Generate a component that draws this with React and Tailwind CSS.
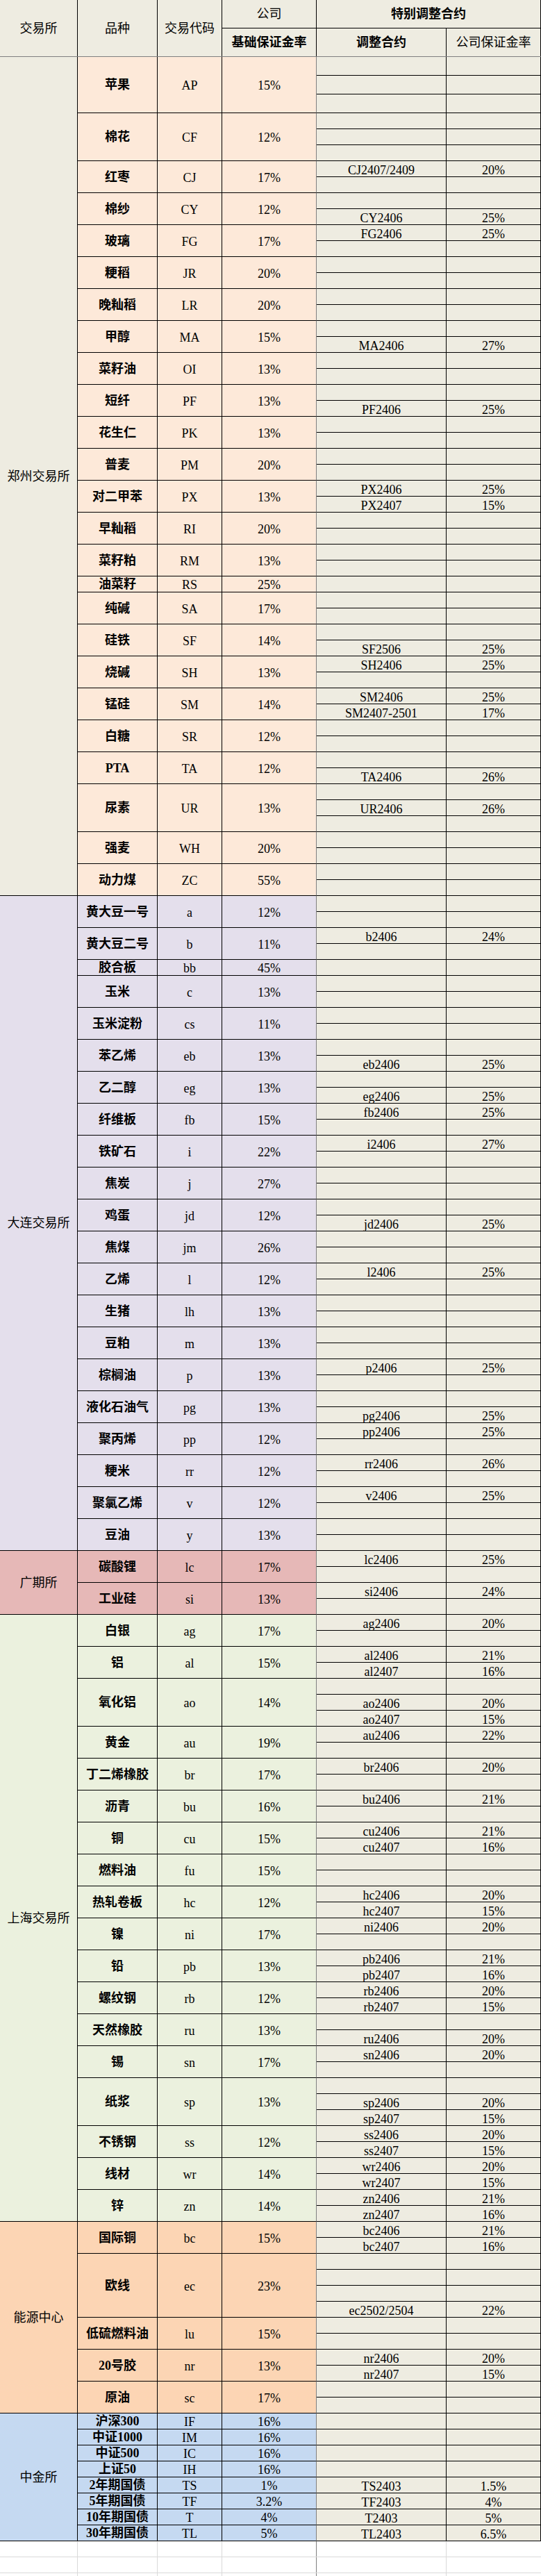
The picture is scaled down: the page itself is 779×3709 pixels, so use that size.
import React from 'react';

// [品种, 代码, 基础保证金率, 特别调整子行, 子行高度]
const groups = [
  {
    name: '郑州交易所',
    ex: 'bg-[#eeece1]',
    cell: 'bg-[#fde9d9]',
    items: [
      ['苹果', 'AP', '15%', [null, null, null], 27],
      ['棉花', 'CF', '12%', [null, null, null]],
      ['红枣', 'CJ', '17%', [['CJ2407/2409', '20%'], null]],
      ['棉纱', 'CY', '12%', [null, ['CY2406', '25%']]],
      ['玻璃', 'FG', '17%', [['FG2406', '25%'], null]],
      ['粳稻', 'JR', '20%', [null, null]],
      ['晚籼稻', 'LR', '20%', [null, null]],
      ['甲醇', 'MA', '15%', [null, ['MA2406', '27%']]],
      ['菜籽油', 'OI', '13%', [null, null]],
      ['短纤', 'PF', '13%', [null, ['PF2406', '25%']]],
      ['花生仁', 'PK', '13%', [null, null]],
      ['普麦', 'PM', '20%', [null, null]],
      ['对二甲苯', 'PX', '13%', [['PX2406', '25%'], ['PX2407', '15%']]],
      ['早籼稻', 'RI', '20%', [null, null]],
      ['菜籽粕', 'RM', '13%', [null, null]],
      ['油菜籽', 'RS', '25%', [null]],
      ['纯碱', 'SA', '17%', [null, null]],
      ['硅铁', 'SF', '14%', [null, ['SF2506', '25%']]],
      ['烧碱', 'SH', '13%', [['SH2406', '25%'], null]],
      ['锰硅', 'SM', '14%', [['SM2406', '25%'], ['SM2407-2501', '17%']]],
      ['白糖', 'SR', '12%', [null, null]],
      ['PTA', 'TA', '12%', [null, ['TA2406', '26%']]],
      ['尿素', 'UR', '13%', [null, ['UR2406', '26%'], null]],
      ['强麦', 'WH', '20%', [null, null]],
      ['动力煤', 'ZC', '55%', [null, null]],
    ],
  },
  {
    name: '大连交易所',
    ex: 'bg-[#e4dfec]',
    cell: 'bg-[#e4dfec]',
    items: [
      ['黄大豆一号', 'a', '12%', [null, null]],
      ['黄大豆二号', 'b', '11%', [['b2406', '24%'], null]],
      ['胶合板', 'bb', '45%', [null]],
      ['玉米', 'c', '13%', [null, null]],
      ['玉米淀粉', 'cs', '11%', [null, null]],
      ['苯乙烯', 'eb', '13%', [null, ['eb2406', '25%']]],
      ['乙二醇', 'eg', '13%', [null, ['eg2406', '25%']]],
      ['纤维板', 'fb', '15%', [['fb2406', '25%'], null]],
      ['铁矿石', 'i', '22%', [['i2406', '27%'], null]],
      ['焦炭', 'j', '27%', [null, null]],
      ['鸡蛋', 'jd', '12%', [null, ['jd2406', '25%']]],
      ['焦煤', 'jm', '26%', [null, null]],
      ['乙烯', 'l', '12%', [['l2406', '25%'], null]],
      ['生猪', 'lh', '13%', [null, null]],
      ['豆粕', 'm', '13%', [null, null]],
      ['棕榈油', 'p', '13%', [['p2406', '25%'], null]],
      ['液化石油气', 'pg', '13%', [null, ['pg2406', '25%']]],
      ['聚丙烯', 'pp', '12%', [['pp2406', '25%'], null]],
      ['粳米', 'rr', '12%', [['rr2406', '26%'], null]],
      ['聚氯乙烯', 'v', '12%', [['v2406', '25%'], null]],
      ['豆油', 'y', '13%', [null, null]],
    ],
  },
  {
    name: '广期所',
    ex: 'bg-[#e6b8b7]',
    cell: 'bg-[#e6b8b7]',
    items: [
      ['碳酸锂', 'lc', '17%', [['lc2406', '25%'], null]],
      ['工业硅', 'si', '13%', [['si2406', '24%'], null]],
    ],
  },
  {
    name: '上海交易所',
    ex: 'bg-[#ebf1de]',
    cell: 'bg-[#ebf1de]',
    items: [
      ['白银', 'ag', '17%', [['ag2406', '20%'], null]],
      ['铝', 'al', '15%', [['al2406', '21%'], ['al2407', '16%']]],
      ['氧化铝', 'ao', '14%', [null, ['ao2406', '20%'], ['ao2407', '15%']]],
      ['黄金', 'au', '19%', [['au2406', '22%'], null]],
      ['丁二烯橡胶', 'br', '17%', [['br2406', '20%'], null]],
      ['沥青', 'bu', '16%', [['bu2406', '21%'], null]],
      ['铜', 'cu', '15%', [['cu2406', '21%'], ['cu2407', '16%']]],
      ['燃料油', 'fu', '15%', [null, null]],
      ['热轧卷板', 'hc', '12%', [['hc2406', '20%'], ['hc2407', '15%']]],
      ['镍', 'ni', '17%', [['ni2406', '20%'], null]],
      ['铅', 'pb', '13%', [['pb2406', '21%'], ['pb2407', '16%']]],
      ['螺纹钢', 'rb', '12%', [['rb2406', '20%'], ['rb2407', '15%']]],
      ['天然橡胶', 'ru', '13%', [null, ['ru2406', '20%']]],
      ['锡', 'sn', '17%', [['sn2406', '20%'], null]],
      ['纸浆', 'sp', '13%', [null, ['sp2406', '20%'], ['sp2407', '15%']]],
      ['不锈钢', 'ss', '12%', [['ss2406', '20%'], ['ss2407', '15%']]],
      ['线材', 'wr', '14%', [['wr2406', '20%'], ['wr2407', '15%']]],
      ['锌', 'zn', '14%', [['zn2406', '21%'], ['zn2407', '16%']]],
    ],
  },
  {
    name: '能源中心',
    ex: 'bg-[#fcd5b4]',
    cell: 'bg-[#fcd5b4]',
    items: [
      ['国际铜', 'bc', '15%', [['bc2406', '21%'], ['bc2407', '16%']]],
      ['欧线', 'ec', '23%', [null, null, null, ['ec2502/2504', '22%']]],
      ['低硫燃料油', 'lu', '15%', [null, null]],
      ['20号胶', 'nr', '13%', [['nr2406', '20%'], ['nr2407', '15%']]],
      ['原油', 'sc', '17%', [null, null]],
    ],
  },
  {
    name: '中金所',
    ex: 'bg-[#c5d9f1]',
    cell: 'bg-[#c5d9f1]',
    items: [
      ['沪深300', 'IF', '16%', [null]],
      ['中证1000', 'IM', '16%', [null]],
      ['中证500', 'IC', '16%', [null]],
      ['上证50', 'IH', '16%', [null]],
      ['2年期国债', 'TS', '1%', [['TS2403', '1.5%']]],
      ['5年期国债', 'TF', '3.2%', [['TF2403', '4%']]],
      ['10年期国债', 'T', '4%', [['T2403', '5%']]],
      ['30年期国债', 'TL', '5%', [['TL2403', '6.5%']]],
    ],
  },
];

function Header() {
  return (
    <div className="flex h-[82px] border-b border-[#7f7f7f] bg-[#eeece1]">
      <div className="flex w-[112px] items-center justify-center border-r border-black">交易所</div>
      <div className="flex w-[115px] items-center justify-center border-r border-black">品种</div>
      <div className="flex w-[93px] items-center justify-center border-r border-black">交易代码</div>
      <div className="flex w-[136px] flex-col border-r border-black">
        <div className="flex h-[41px] items-center justify-center border-b border-black">公司</div>
        <div className="flex flex-1 items-center justify-center font-semibold">基础保证金率</div>
      </div>
      <div className="flex w-[323px] flex-col">
        <div className="flex h-[41px] items-center justify-center border-r border-b border-black font-semibold">
          特别调整合约
        </div>
        <div className="flex flex-1">
          <div className="flex w-[187px] items-center justify-center border-r border-black font-semibold">调整合约</div>
          <div className="flex w-[136px] items-center justify-center border-r border-black">公司保证金率</div>
        </div>
      </div>
    </div>
  );
}

function Variety({ item, bg }) {
  const [name, code, rate, subs, h] = item;
  return (
    <div className="flex">
      <div className={`flex w-[115px] items-center justify-center border-r border-b border-black font-semibold ${bg}`}>
        {name}
      </div>
      <div className={`flex w-[93px] items-center justify-center border-r border-b border-black pt-[2px] ${bg}`}>
        {code}
      </div>
      <div className={`flex w-[136px] items-center justify-center border-r border-b border-r-[#808080] border-b-black pt-[2px] ${bg}`}>
        {rate}
      </div>
      <div className="flex w-[323px] flex-col bg-[#eeece1]">
        {subs.map((s, i) => (
          <div key={i} className={`flex border-b border-black ${h === 27 ? 'h-[27px]' : 'h-[23px]'}`}>
            <div className="flex w-[187px] items-center justify-center border-r border-black pt-[3px]">{s ? s[0] : ''}</div>
            <div className="flex w-[136px] items-center justify-center border-r border-black pt-[3px]">{s ? s[1] : ''}</div>
          </div>
        ))}
      </div>
    </div>
  );
}

function Group({ g }) {
  return (
    <div className="flex">
      <div className={`flex w-[112px] shrink-0 items-center justify-center border-r border-b border-black ${g.ex}`}>
        {g.name}
      </div>
      <div className="flex flex-col">
        {g.items.map((it) => (
          <Variety key={it[1]} item={it} bg={g.cell} />
        ))}
      </div>
    </div>
  );
}

function EmptyRow({ last }) {
  return (
    <div className={`flex bg-white ${last ? 'h-[4px]' : 'h-[23px] border-b border-[#d9d9d9]'}`}>
      <div className="w-[112px] border-r border-[#d9d9d9]" />
      <div className="w-[115px] border-r border-[#d9d9d9]" />
      <div className="w-[93px] border-r border-[#d9d9d9]" />
      <div className="w-[136px] border-r border-[#808080]" />
      <div className="w-[187px] border-r border-[#d9d9d9]" />
      <div className="w-[136px]" />
    </div>
  );
}

export default function App() {
  return (
    <div className="w-[779px] bg-white font-['Liberation_Serif','Noto_Sans_CJK_SC',serif] text-[18px] leading-none text-black">
      <Header />
      {groups.map((g) => (
        <Group key={g.name} g={g} />
      ))}
      <EmptyRow />
      <EmptyRow />
      <EmptyRow last />
    </div>
  );
}
